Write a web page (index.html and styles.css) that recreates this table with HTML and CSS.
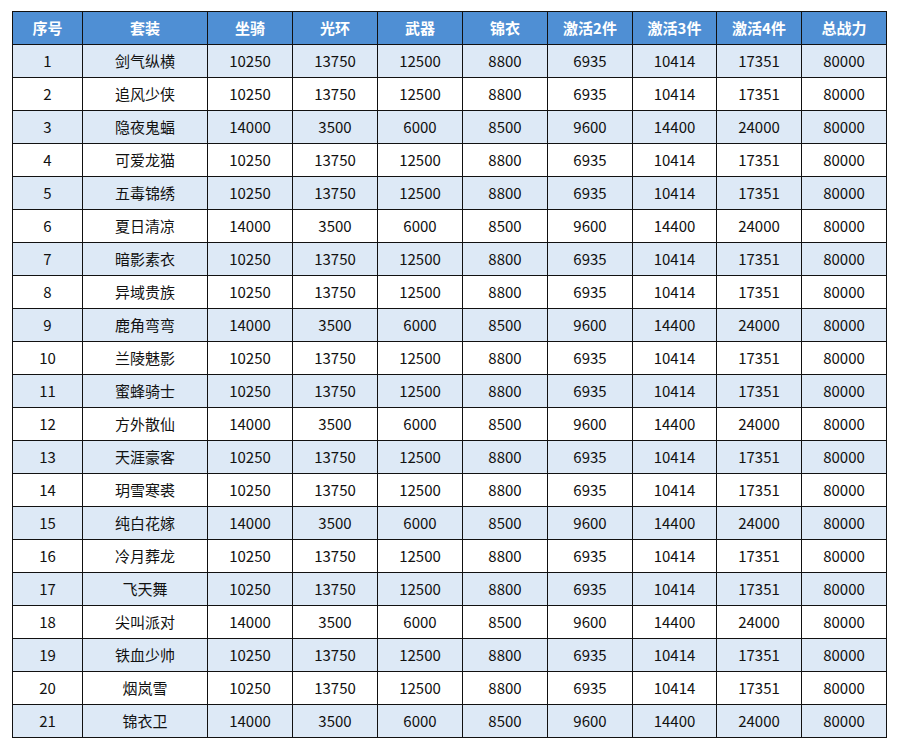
FILE: index.html
```html
<!DOCTYPE html>
<html lang="zh">
<head>
<meta charset="utf-8">
<link rel="stylesheet" href="styles.css">
</head>
<body>
<table class="tbl">
<colgroup>
<col class="c-no"><col class="c-name"><col class="c-n"><col class="c-n"><col class="c-n"><col class="c-n"><col class="c-n"><col class="c-n3"><col class="c-n"><col class="c-n">
</colgroup>
<thead>
<tr><th>序号</th><th>套装</th><th>坐骑</th><th>光环</th><th>武器</th><th>锦衣</th><th>激活2件</th><th>激活3件</th><th>激活4件</th><th>总战力</th></tr>
</thead>
<tbody>
<tr><td>1</td><td>剑气纵横</td><td>10250</td><td>13750</td><td>12500</td><td>8800</td><td>6935</td><td>10414</td><td>17351</td><td>80000</td></tr>
<tr><td>2</td><td>追风少侠</td><td>10250</td><td>13750</td><td>12500</td><td>8800</td><td>6935</td><td>10414</td><td>17351</td><td>80000</td></tr>
<tr><td>3</td><td>隐夜鬼蝠</td><td>14000</td><td>3500</td><td>6000</td><td>8500</td><td>9600</td><td>14400</td><td>24000</td><td>80000</td></tr>
<tr><td>4</td><td>可爱龙猫</td><td>10250</td><td>13750</td><td>12500</td><td>8800</td><td>6935</td><td>10414</td><td>17351</td><td>80000</td></tr>
<tr><td>5</td><td>五毒锦绣</td><td>10250</td><td>13750</td><td>12500</td><td>8800</td><td>6935</td><td>10414</td><td>17351</td><td>80000</td></tr>
<tr><td>6</td><td>夏日清凉</td><td>14000</td><td>3500</td><td>6000</td><td>8500</td><td>9600</td><td>14400</td><td>24000</td><td>80000</td></tr>
<tr><td>7</td><td>暗影素衣</td><td>10250</td><td>13750</td><td>12500</td><td>8800</td><td>6935</td><td>10414</td><td>17351</td><td>80000</td></tr>
<tr><td>8</td><td>异域贵族</td><td>10250</td><td>13750</td><td>12500</td><td>8800</td><td>6935</td><td>10414</td><td>17351</td><td>80000</td></tr>
<tr><td>9</td><td>鹿角弯弯</td><td>14000</td><td>3500</td><td>6000</td><td>8500</td><td>9600</td><td>14400</td><td>24000</td><td>80000</td></tr>
<tr><td>10</td><td>兰陵魅影</td><td>10250</td><td>13750</td><td>12500</td><td>8800</td><td>6935</td><td>10414</td><td>17351</td><td>80000</td></tr>
<tr><td>11</td><td>蜜蜂骑士</td><td>10250</td><td>13750</td><td>12500</td><td>8800</td><td>6935</td><td>10414</td><td>17351</td><td>80000</td></tr>
<tr><td>12</td><td>方外散仙</td><td>14000</td><td>3500</td><td>6000</td><td>8500</td><td>9600</td><td>14400</td><td>24000</td><td>80000</td></tr>
<tr><td>13</td><td>天涯豪客</td><td>10250</td><td>13750</td><td>12500</td><td>8800</td><td>6935</td><td>10414</td><td>17351</td><td>80000</td></tr>
<tr><td>14</td><td>玥雪寒裘</td><td>10250</td><td>13750</td><td>12500</td><td>8800</td><td>6935</td><td>10414</td><td>17351</td><td>80000</td></tr>
<tr><td>15</td><td>纯白花嫁</td><td>14000</td><td>3500</td><td>6000</td><td>8500</td><td>9600</td><td>14400</td><td>24000</td><td>80000</td></tr>
<tr><td>16</td><td>冷月葬龙</td><td>10250</td><td>13750</td><td>12500</td><td>8800</td><td>6935</td><td>10414</td><td>17351</td><td>80000</td></tr>
<tr><td>17</td><td>飞天舞</td><td>10250</td><td>13750</td><td>12500</td><td>8800</td><td>6935</td><td>10414</td><td>17351</td><td>80000</td></tr>
<tr><td>18</td><td>尖叫派对</td><td>14000</td><td>3500</td><td>6000</td><td>8500</td><td>9600</td><td>14400</td><td>24000</td><td>80000</td></tr>
<tr><td>19</td><td>铁血少帅</td><td>10250</td><td>13750</td><td>12500</td><td>8800</td><td>6935</td><td>10414</td><td>17351</td><td>80000</td></tr>
<tr><td>20</td><td>烟岚雪</td><td>10250</td><td>13750</td><td>12500</td><td>8800</td><td>6935</td><td>10414</td><td>17351</td><td>80000</td></tr>
<tr><td>21</td><td>锦衣卫</td><td>14000</td><td>3500</td><td>6000</td><td>8500</td><td>9600</td><td>14400</td><td>24000</td><td>80000</td></tr>
</tbody>
</table>
</body>
</html>
```
FILE: styles.css
```css
html, body {
  margin: 0;
  padding: 0;
  background: #ffffff;
}
body {
  padding: 11px 0 0 12px;
  font-family: "Noto Sans CJK SC", "Noto Sans", sans-serif;
}
.tbl {
  border-collapse: collapse;
  table-layout: fixed;
  width: 875px;
  font-size: 15px;
  color: #111111;
}
.c-no { width: 70px; }
.c-name { width: 125px; }
.c-n { width: 85px; }
.c-n3 { width: 84px; }
.tbl th, .tbl td {
  border: 1px solid #111111;
  height: 33px;
  padding: 0;
  text-align: center;
  vertical-align: middle;
  line-height: 20px;
  box-sizing: border-box;
}
.tbl th {
  background: #4f8fd4;
  color: #ffffff;
  font-weight: 700;
}
.tbl tbody tr:nth-child(odd) td {
  background: #dde9f6;
}
.tbl tbody tr:nth-child(even) td {
  background: #ffffff;
}
```
